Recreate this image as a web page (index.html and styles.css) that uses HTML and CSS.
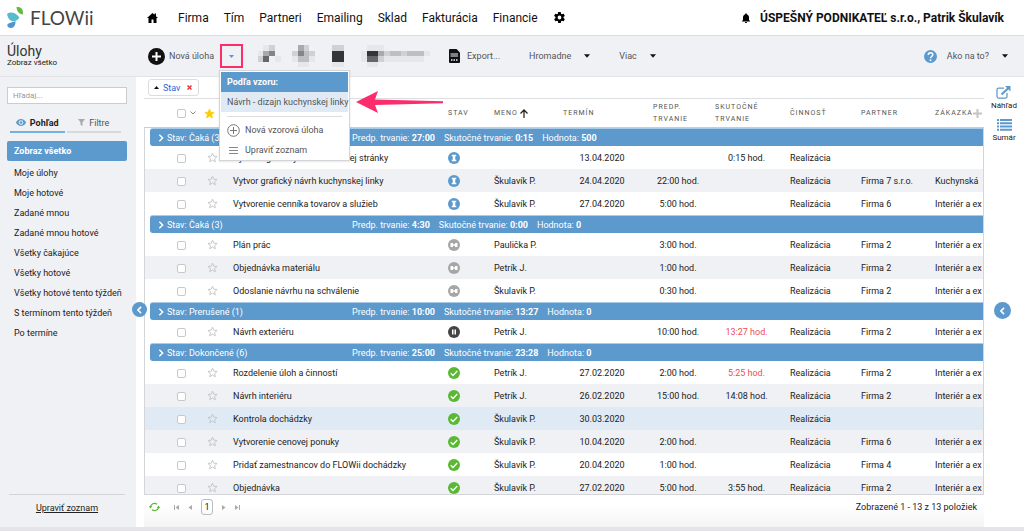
FILE: index.html
```html
<!DOCTYPE html>
<html lang="sk">
<head>
    <meta charset="UTF-8">
    <meta name="viewport" content="width=device-width, initial-scale=1.0">
    <title>FLOWii - Úlohy</title>
    <link rel="stylesheet" href="styles.css">
</head>
<body>
    <svg class="sprite" aria-hidden="true">
        <symbol id="star" viewBox="0 0 24 24"><path d="M12 2.5l2.8 6.6 7.2.6-5.5 4.7 1.7 7L12 17.600l-6.200 3.800 1.700-7L2 9.700l7.200-.6z"/></symbol>
        <symbol id="waiting" viewBox="0 0 24 24"><circle cx="12" cy="12" r="12" fill="#5c99cd"/><path fill="#fff" d="M7.500 5.500h9v3h-2v7h2v3h-9v-3h2v-7h-2z"/></symbol>
        <symbol id="idle" viewBox="0 0 24 24"><circle cx="12" cy="12" r="12" fill="#a6a6a6"/><path fill="#fff" d="M5 8h5v2.500h4V8h5v8h-5v-2.500h-4V16H5z"/></symbol>
        <symbol id="paused" viewBox="0 0 24 24"><circle cx="12" cy="12" r="12" fill="#444"/><path fill="#fff" d="M8 7h3v10H8zM13 7h3v10h-3z"/></symbol>
        <symbol id="done" viewBox="0 0 24 24"><circle cx="12" cy="12" r="12" fill="#5bb833"/><path fill="none" stroke="#fff" stroke-width="2.600" d="M5.500 12.500l4.500 4.500L18.500 8"/></symbol>
        <symbol id="chevron" viewBox="0 0 8 12"><path fill="none" stroke="currentColor" stroke-width="2.200" d="M1.500 1l5 5-5 5"/></symbol>
        <symbol id="caret" viewBox="0 0 10 6"><path fill="currentColor" d="M0 0h10L5 6z"/></symbol>
    </svg>

    <header class="topbar">
        <a class="logo" href="#">
            <svg width="17" height="22" viewBox="0 0 17 22">
                <path fill="#62bb35" d="M9.500 0c4-.5 6.500 2 6.500 5.500 0 .8-.1 1.500-.3 2.100C12 7 9.800 4.500 9.500 0z"/>
                <path fill="#56bccb" d="M0 7c3.500-2.500 8.500-2 12.500 3.700-2.500 3.300-6 4.300-8.500 3C1.500 12.500.7 9.800 0 7z"/>
                <path fill="#5594cd" d="M8.500 14c.3 4-1.500 7-4.500 7-2.200 0-3.500-1.200-3.800-2.800C1 15.500 4.500 16 8.500 14z"/>
            </svg>
            <span>FLOWii</span>
        </a>
        <nav class="mainnav">
            <a href="#" aria-label="Domov"><svg width="11" height="10" viewBox="0 0 22 20"><path d="M11 0L0 10h3v10h6v-7h4v7h6V10h3l-4-3.600V1h-3v2.600z"/></svg></a>
            <a href="#">Firma</a>
            <a href="#">Tím</a>
            <a href="#">Partneri</a>
            <a href="#">Emailing</a>
            <a href="#">Sklad</a>
            <a href="#">Fakturácia</a>
            <a href="#">Financie</a>
            <a href="#" aria-label="Nastavenia"><svg width="13" height="13" viewBox="0 0 24 24"><path d="M19.400 13c.1-.7.1-1.300 0-2l2.200-1.700c.2-.2.3-.5.100-.7l-2-3.500c-.1-.2-.4-.3-.7-.2l-2.500 1c-.5-.4-1.100-.7-1.700-1L14.400 2.400c0-.2-.2-.4-.5-.4h-4c-.2 0-.5.200-.5.400L9 5c-.6.300-1.100.6-1.700 1l-2.500-1c-.2-.1-.5 0-.6.200l-2 3.500c-.1.200-.1.500.1.600L4.600 11c-.1.700-.1 1.300 0 2l-2.200 1.700c-.2.100-.2.400-.1.600l2 3.500c.1.200.4.300.6.200l2.500-1c.5.400 1.100.7 1.700 1l.4 2.600c0 .2.200.4.500.4h4c.2 0 .5-.2.500-.4l.4-2.600c.6-.3 1.100-.6 1.700-1l2.500 1c.2.100.5 0 .6-.2l2-3.500c.1-.2.1-.5-.1-.6zM12 15.500a3.500 3.500 0 110-7 3.500 3.500 0 010 7z"/></svg></a>
        </nav>
        <div class="account">
            <svg width="8" height="10" viewBox="0 0 16 20"><path d="M8 20c1.200 0 2.200-.8 2.200-2H5.800c0 1.200 1 2 2.200 2zm6-6V9c0-3.200-1.700-5.800-4.500-6.500V1.800a1.500 1.500 0 00-3 0v.7C3.700 3.200 2 5.800 2 9v5l-2 2v1h16v-1z"/></svg>
            <strong>ÚSPEŠNÝ PODNIKATEĽ s.r.o., Patrik Škulavík</strong>
        </div>
    </header>

    <div class="toolbar">
        <div class="page-title">
            <h1>Úlohy</h1>
            <span>Zobraz všetko</span>
        </div>
        <button class="tool new-task" type="button">
            <svg width="17" height="17" viewBox="0 0 17 17"><circle cx="8.500" cy="8.500" r="8.500" fill="#111"/><path stroke="#fff" stroke-width="2" d="M8.500 4v9M4 8.500h9"/></svg>
            Nová úloha
        </button>
        <div class="split">
            <button class="split-toggle" type="button" aria-label="Vzory úloh"><svg width="5" height="3"><use href="#caret"/></svg></button>
            <div class="menu">
                <div class="menu-title">Podľa vzoru:</div>
                <a class="menu-item active" href="#">Návrh - dizajn kuchynskej linky</a>
                <div class="menu-sep"></div>
                <a class="menu-item" href="#">
                    <svg width="13" height="13" viewBox="0 0 13 13" fill="none" stroke="#777"><circle cx="6.500" cy="6.500" r="5.800"/><path d="M6.500 3v7M3 6.500h7"/></svg>
                    Nová vzorová úloha
                </a>
                <a class="menu-item" href="#">
                    <svg width="13" height="9" viewBox="0 0 13 9" stroke="#888"><path d="M2 1.500h9M2 4.500h9M2 7.500h9"/></svg>
                    Upraviť zoznam
                </a>
            </div>
            <svg class="pointer" width="88" height="22" viewBox="0 0 88 22"><path fill="#fc2d6c" d="M0 11L22 0l-3 8.500L87 10.200v2L19 14l3 8z"/></svg>
        </div>
        <svg class="masked" width="178" height="22" viewBox="0 0 31 4" preserveAspectRatio="none" shape-rendering="crispEdges">
            <path fill="#e6e7ea" d="M2 0h2v1H2zM1 1h1v2H1zM4 2h1v1H4zM7 1h1v2H7zM10 1h1v2h-1zM8 3h2v1H8zM14 3h2v1h-2zM19 1h1v2h-1zM20 0h2v1h-2zM20 3h2v1h-2zM23 2h7v1h-7zM22 0h1v1h-1zM30 1h1v1h-1z"/>
            <path fill="#d0d1d3" d="M3 0h1v1H3zM1 2h1v1H1zM9 0h1v1H9zM7 1h1v1H7zM14 0h2v1h-2zM22 2h1v1h-1zM23 1h1v1h-1zM26 1h1v1h-1zM10 1h1v1h-1z"/>
            <path fill="#bebfc1" d="M24 1h2v1h-2zM27 1h3v1h-3zM8 0h1v1H8zM9 1h1v2H9zM8 2h1v1H8z"/>
            <path fill="#a9a9ab" d="M2 1h1v1H2zM8 0h1v1H8zM22 1h1v1h-1z"/>
            <path fill="#858587" d="M3 1h1v1H3zM8 1h1v1H8z"/>
            <path fill="#666769" d="M2 2h1v1H2zM20 2h2v1h-2z"/>
            <path fill="#333536" d="M14 1h2v2h-2zM20 1h2v1h-2z"/>
        </svg>
        <button class="tool export" type="button">
            <svg width="11" height="14" viewBox="0 0 22 28"><path fill="#111" d="M2 0h13l7 7v19a2 2 0 01-2 2H2a2 2 0 01-2-2V2a2 2 0 012-2z"/><path stroke="#f0f1f5" stroke-width="2" d="M3 10h15M3 14h15"/><path stroke="#f0f1f5" stroke-width="3" d="M4 22h3M9 22h3M14 22h3"/></svg>
            Export...
        </button>
        <button class="tool dropdown" type="button">Hromadne <svg width="6" height="4"><use href="#caret"/></svg></button>
        <button class="tool dropdown" type="button">Viac <svg width="6" height="4"><use href="#caret"/></svg></button>
        <button class="tool help" type="button">
            <svg width="13" height="13" viewBox="0 0 26 26"><circle cx="13" cy="13" r="13" fill="#5c99cd"/><path fill="none" stroke="#fff" stroke-width="3" d="M8.500 10c0-6 9-6 9-.5 0 3.500-4.500 3.500-4.500 7"/><circle cx="13" cy="20.500" r="2" fill="#fff"/></svg>
            Ako na to?
            <svg class="help-caret" width="6" height="4"><use href="#caret"/></svg>
        </button>
    </div>

    <div class="layout">
        <aside class="sidebar">
            <input class="search" type="text" placeholder="Hľadaj..." aria-label="Hľadaj">
            <div class="tabs">
                <button class="tab current" type="button">
                    <svg width="10" height="7" viewBox="0 0 20 14"><path fill="#5c99cd" d="M10 0C5.500 0 1.700 2.900 0 7c1.700 4.100 5.500 7 10 7s8.300-2.900 10-7c-1.700-4.100-5.500-7-10-7z"/><circle cx="10" cy="7" r="4.500" fill="#f0f1f5"/><circle cx="10" cy="7" r="2.700" fill="#5c99cd"/></svg>
                    Pohľad
                </button>
                <button class="tab" type="button">
                    <svg width="7" height="7" viewBox="0 0 14 14"><path fill="#aaa" d="M0 0h14L9 6.500V14l-4-2.500v-5z"/></svg>
                    Filtre
                </button>
            </div>
            <ul class="views">
                <li><a class="selected" href="#">Zobraz všetko</a></li>
                <li><a href="#">Moje úlohy</a></li>
                <li><a href="#">Moje hotové</a></li>
                <li><a href="#">Zadané mnou</a></li>
                <li><a href="#">Zadané mnou hotové</a></li>
                <li><a href="#">Všetky čakajúce</a></li>
                <li><a href="#">Všetky hotové</a></li>
                <li><a href="#">Všetky hotové tento týždeň</a></li>
                <li><a href="#">S termínom tento týždeň</a></li>
                <li><a href="#">Po termíne</a></li>
            </ul>
            <div class="sidebar-foot"><a href="#">Upraviť zoznam</a></div>
            <button class="collapse collapse-left" type="button" aria-label="Skryť panel"><svg width="5" height="8" viewBox="0 0 8 12"><path fill="none" stroke="currentColor" stroke-width="2.500" d="M6.500 1l-5 5 5 5"/></svg></button>
        </aside>

        <main class="content">
            <div class="grouping">
                <button class="chip" type="button">
                    <svg width="5" height="3" viewBox="0 0 10 6"><path fill="#111" d="M0 6h10L5 0z"/></svg>
                    Stav
                    <svg class="chip-x" width="5" height="5" viewBox="0 0 10 10"><path stroke="#e23b3b" stroke-width="3" d="M1 1l8 8M9 1L1 9"/></svg>
                </button>
            </div>
            <div class="grid">
                <table>
                    <colgroup>
                        <col class="c-check"><col class="c-star"><col><col class="c-state"><col class="c-name"><col class="c-term">
                        <col class="c-plan"><col class="c-real"><col class="c-act"><col class="c-partner"><col class="c-order">
                    </colgroup>
                    <thead>
                        <tr>
                            <th class="check"><input type="checkbox" aria-label="Označiť všetko"><svg class="check-more" width="6" height="4" viewBox="0 0 12 8"><path fill="none" stroke="#888" stroke-width="2" d="M1 1l5 5 5-5"/></svg></th>
                            <th class="fav"><svg class="star gold" width="11" height="11"><use href="#star"/></svg></th>
                            <th></th>
                            <th>Stav</th>
                            <th>Meno<svg class="sort" width="8" height="9" viewBox="0 0 16 18"><path fill="none" stroke="#222" stroke-width="2.500" d="M8 18V2M1 9l7-7 7 7"/></svg></th>
                            <th>Termín</th>
                            <th>Predp. trvanie</th>
                            <th>Skutočné trvanie</th>
                            <th>Činnosť</th>
                            <th>Partner</th>
                            <th>Zákazka<svg class="add-col" width="9" height="9" viewBox="0 0 9 9"><path stroke="#c4c4c4" stroke-width="2" d="M4.500 0v9M0 4.500h9"/></svg></th>
                        </tr>
                    </thead>
                    <tbody>
                        <tr class="group"><td colspan="11"><div class="band"><span class="band-name"><svg width="6" height="8"><use href="#chevron"/></svg>Stav: Čaká (3)</span><span>Predp. trvanie: <b>27:00</b></span><span>Skutočné trvanie: <b>0:15</b></span><span>Hodnota: <b>500</b></span></div></td></tr>
                        <tr>
                            <td class="check"><input type="checkbox" aria-label="Označiť"></td><td class="fav"><svg class="star" width="11" height="11"><use href="#star"/></svg></td>
                            <td>Vytvoriť grafický návrh webovej stránky</td><td><svg class="state" width="12" height="12"><use href="#waiting"/></svg></td>
                            <td></td><td class="num">13.04.2020</td><td></td><td class="num">0:15 hod.</td><td>Realizácia</td><td></td><td></td>
                        </tr>
                        <tr class="alt">
                            <td class="check"><input type="checkbox" aria-label="Označiť"></td><td class="fav"><svg class="star" width="11" height="11"><use href="#star"/></svg></td>
                            <td>Vytvor grafický návrh kuchynskej linky</td><td><svg class="state" width="12" height="12"><use href="#waiting"/></svg></td>
                            <td>Škulavík P.</td><td class="num">24.04.2020</td><td class="num">22:00 hod.</td><td></td><td>Realizácia</td><td>Firma 7 s.r.o.</td><td>Kuchynská</td>
                        </tr>
                        <tr>
                            <td class="check"><input type="checkbox" aria-label="Označiť"></td><td class="fav"><svg class="star" width="11" height="11"><use href="#star"/></svg></td>
                            <td>Vytvorenie cenníka tovarov a služieb</td><td><svg class="state" width="12" height="12"><use href="#waiting"/></svg></td>
                            <td>Škulavík P.</td><td class="num">27.04.2020</td><td class="num">5:00 hod.</td><td></td><td>Realizácia</td><td>Firma 6</td><td>Interiér a ex</td>
                        </tr>
                        <tr class="group"><td colspan="11"><div class="band"><span class="band-name"><svg width="6" height="8"><use href="#chevron"/></svg>Stav: Čaká (3)</span><span>Predp. trvanie: <b>4:30</b></span><span>Skutočné trvanie: <b>0:00</b></span><span>Hodnota: <b>0</b></span></div></td></tr>
                        <tr>
                            <td class="check"><input type="checkbox" aria-label="Označiť"></td><td class="fav"><svg class="star" width="11" height="11"><use href="#star"/></svg></td>
                            <td>Plán prác</td><td><svg class="state" width="12" height="12"><use href="#idle"/></svg></td>
                            <td>Paulička P.</td><td></td><td class="num">3:00 hod.</td><td></td><td>Realizácia</td><td>Firma 2</td><td>Interiér a ex</td>
                        </tr>
                        <tr class="alt">
                            <td class="check"><input type="checkbox" aria-label="Označiť"></td><td class="fav"><svg class="star" width="11" height="11"><use href="#star"/></svg></td>
                            <td>Objednávka materiálu</td><td><svg class="state" width="12" height="12"><use href="#idle"/></svg></td>
                            <td>Petrík J.</td><td></td><td class="num">1:00 hod.</td><td></td><td>Realizácia</td><td>Firma 2</td><td>Interiér a ex</td>
                        </tr>
                        <tr>
                            <td class="check"><input type="checkbox" aria-label="Označiť"></td><td class="fav"><svg class="star" width="11" height="11"><use href="#star"/></svg></td>
                            <td>Odoslanie návrhu na schválenie</td><td><svg class="state" width="12" height="12"><use href="#idle"/></svg></td>
                            <td>Škulavík P.</td><td></td><td class="num">0:30 hod.</td><td></td><td>Realizácia</td><td>Firma 2</td><td>Interiér a ex</td>
                        </tr>
                        <tr class="group"><td colspan="11"><div class="band"><span class="band-name"><svg width="6" height="8"><use href="#chevron"/></svg>Stav: Prerušené (1)</span><span>Predp. trvanie: <b>10:00</b></span><span>Skutočné trvanie: <b>13:27</b></span><span>Hodnota: <b>0</b></span></div></td></tr>
                        <tr>
                            <td class="check"><input type="checkbox" aria-label="Označiť"></td><td class="fav"><svg class="star" width="11" height="11"><use href="#star"/></svg></td>
                            <td>Návrh exteriéru</td><td><svg class="state" width="12" height="12"><use href="#paused"/></svg></td>
                            <td>Petrík J.</td><td></td><td class="num">10:00 hod.</td><td class="num over">13:27 hod.</td><td>Realizácia</td><td>Firma 2</td><td>Interiér a ex</td>
                        </tr>
                        <tr class="group"><td colspan="11"><div class="band"><span class="band-name"><svg width="6" height="8"><use href="#chevron"/></svg>Stav: Dokončené (6)</span><span>Predp. trvanie: <b>25:00</b></span><span>Skutočné trvanie: <b>23:28</b></span><span>Hodnota: <b>0</b></span></div></td></tr>
                        <tr>
                            <td class="check"><input type="checkbox" aria-label="Označiť"></td><td class="fav"><svg class="star" width="11" height="11"><use href="#star"/></svg></td>
                            <td>Rozdelenie úloh a činností</td><td><svg class="state" width="12" height="12"><use href="#done"/></svg></td>
                            <td>Petrík J.</td><td class="num">27.02.2020</td><td class="num">2:00 hod.</td><td class="num over">5:25 hod.</td><td>Realizácia</td><td>Firma 2</td><td>Interiér a ex</td>
                        </tr>
                        <tr class="alt">
                            <td class="check"><input type="checkbox" aria-label="Označiť"></td><td class="fav"><svg class="star" width="11" height="11"><use href="#star"/></svg></td>
                            <td>Návrh interiéru</td><td><svg class="state" width="12" height="12"><use href="#done"/></svg></td>
                            <td>Petrík J.</td><td class="num">26.02.2020</td><td class="num">15:00 hod.</td><td class="num">14:08 hod.</td><td>Realizácia</td><td>Firma 2</td><td>Interiér a ex</td>
                        </tr>
                        <tr class="hovered">
                            <td class="check"><input type="checkbox" aria-label="Označiť"></td><td class="fav"><svg class="star" width="11" height="11"><use href="#star"/></svg></td>
                            <td>Kontrola dochádzky</td><td><svg class="state" width="12" height="12"><use href="#done"/></svg></td>
                            <td>Škulavík P.</td><td class="num">30.03.2020</td><td></td><td></td><td>Realizácia</td><td></td><td></td>
                        </tr>
                        <tr class="alt">
                            <td class="check"><input type="checkbox" aria-label="Označiť"></td><td class="fav"><svg class="star" width="11" height="11"><use href="#star"/></svg></td>
                            <td>Vytvorenie cenovej ponuky</td><td><svg class="state" width="12" height="12"><use href="#done"/></svg></td>
                            <td>Škulavík P.</td><td class="num">10.04.2020</td><td class="num">2:00 hod.</td><td></td><td>Realizácia</td><td>Firma 6</td><td>Interiér a ex</td>
                        </tr>
                        <tr>
                            <td class="check"><input type="checkbox" aria-label="Označiť"></td><td class="fav"><svg class="star" width="11" height="11"><use href="#star"/></svg></td>
                            <td>Pridať zamestnancov do FLOWii dochádzky</td><td><svg class="state" width="12" height="12"><use href="#done"/></svg></td>
                            <td>Škulavík P.</td><td class="num">20.04.2020</td><td class="num">1:00 hod.</td><td></td><td>Realizácia</td><td>Firma 4</td><td>Interiér a ex</td>
                        </tr>
                        <tr class="alt">
                            <td class="check"><input type="checkbox" aria-label="Označiť"></td><td class="fav"><svg class="star" width="11" height="11"><use href="#star"/></svg></td>
                            <td>Objednávka</td><td><svg class="state" width="12" height="12"><use href="#done"/></svg></td>
                            <td>Škulavík P.</td><td class="num">27.02.2020</td><td class="num">5:00 hod.</td><td class="num">3:55 hod.</td><td>Realizácia</td><td>Firma 2</td><td>Interiér a ex</td>
                        </tr>
                    </tbody>
                </table>
            </div>
            <div class="pager">
                <button class="refresh" type="button" aria-label="Obnoviť"><svg width="11" height="10" viewBox="0 0 22 20"><path fill="none" stroke="#5bb833" stroke-width="2.500" d="M3 10a8 7.500 0 0113-5.500M19 10a8 7.500 0 01-13 5.500"/><path fill="#5bb833" d="M-.5 8h7L3 13zM22.500 12h-7L19 7z"/></svg></button>
                <button type="button" aria-label="Prvá"><svg width="5" height="5" viewBox="0 0 10 10"><path fill="#aaa" d="M0 0h2v10H0zM10 0v10L3 5z"/></svg></button>
                <button type="button" aria-label="Predošlá"><svg width="4" height="5" viewBox="0 0 8 10"><path fill="#aaa" d="M8 0v10L1 5z"/></svg></button>
                <button class="page" type="button">1</button>
                <button type="button" aria-label="Ďalšia"><svg width="4" height="5" viewBox="0 0 8 10"><path fill="#aaa" d="M0 0v10l7-5z"/></svg></button>
                <button type="button" aria-label="Posledná"><svg width="5" height="5" viewBox="0 0 10 10"><path fill="#aaa" d="M8 0h2v10H8zM0 0v10l7-5z"/></svg></button>
                <span class="count">Zobrazené 1 - 13 z 13 položiek</span>
            </div>
        </main>

        <aside class="rail">
            <a href="#">
                <svg width="15" height="13" viewBox="0 0 30 26"><path fill="none" stroke="#5c99cd" stroke-width="2.500" d="M16 4H5a3 3 0 00-3 3v14a3 3 0 003 3h14a3 3 0 003-3v-7"/><path stroke="#5c99cd" stroke-width="4" d="M11 17L25 4"/><path fill="#5c99cd" d="M18 0h11v11z"/></svg>
                Náhľad
            </a>
            <a href="#">
                <svg width="15" height="12" viewBox="0 0 30 24"><path stroke="#5c99cd" stroke-width="4" d="M0 2h4M6 2h24M0 8.500h4M6 8.500h24M0 15h4M6 15h24M0 21.500h4M6 21.500h24"/></svg>
                Sumár
            </a>
            <button class="collapse collapse-right" type="button" aria-label="Zobraziť panel"><svg width="5" height="8" viewBox="0 0 8 12"><path fill="none" stroke="currentColor" stroke-width="2.500" d="M6.500 1l-5 5 5 5"/></svg></button>
        </aside>
    </div>
    <div class="bottom-edge"></div>
</body>
</html>
```
FILE: styles.css
```css
* {
    box-sizing: border-box;
}
body {
    margin: 0;
    height: 100vh;
    display: flex;
    flex-direction: column;
    font-family: Roboto, "Liberation Sans", sans-serif;
    font-size: 9px;
    color: #222;
    background-color: #fff;
    overflow: hidden;
}
a {
    color: inherit;
    text-decoration: none;
}
button {
    font: inherit;
    color: inherit;
    padding: 0;
    border: none;
    background: none;
    cursor: pointer;
}
svg {
    flex: none;
}
.sprite {
    display: none;
}

/* top navigation */
.topbar {
    display: flex;
    align-items: center;
    height: 36px;
    padding-right: 20px;
    border-bottom: 1px solid #dcdde0;
}
.logo {
    display: flex;
    width: 147px;
    padding-left: 7px;
    gap: 6px;
    align-items: center;
    font-family: Lato, sans-serif;
    font-size: 19px;
    line-height: 22px;
    color: #444;
}
.mainnav {
    display: flex;
    align-items: center;
    gap: 15px;
    font-size: 12px;
    color: #111;
}
.mainnav a:first-child {
    margin-right: 5px;
}
.mainnav svg {
    display: block;
}
.account {
    display: flex;
    align-items: center;
    gap: 10px;
    margin-left: auto;
    font-size: 12px;
    color: #111;
}

/* toolbar */
.toolbar {
    display: flex;
    align-items: center;
    height: 41px;
    padding-right: 16px;
    background-color: #f0f1f5;
    border-bottom: 1px solid #e2e3e6;
}
.page-title {
    width: 148px;
    padding-left: 7px;
    font-size: 8px;
    line-height: 10px;
}
.page-title h1 {
    margin: 0;
    font-size: 14px;
    font-weight: normal;
    line-height: 14px;
    color: #333;
}
.tool {
    display: flex;
    align-items: center;
    color: #555;
    white-space: nowrap;
}
.tool svg {
    color: #111;
}
.new-task {
    width: 72px;
    gap: 4px;
}
.split {
    position: relative;
}
.split-toggle {
    display: flex;
    align-items: center;
    justify-content: center;
    width: 23px;
    height: 24px;
    border: 2px solid #fc2d6c;
    color: #5c99cd;
}
.masked {
    margin-left: 9px;
}
.export {
    margin-left: 19px;
    gap: 7px;
}
.dropdown {
    margin-left: 29px;
    gap: 13px;
}
.help {
    margin-left: auto;
    gap: 10px;
}
.help-caret {
    margin-left: 3px;
}

/* template menu */
.menu {
    position: absolute;
    top: 26px;
    left: -1px;
    z-index: 5;
    width: 131px;
    padding: 1px 1px 0;
    background-color: #fff;
    border: 1px solid #d3d5d8;
    box-shadow: 0 1px 2px rgba(0,0,0,0.1);
    white-space: nowrap;
}
.menu-title {
    padding-left: 6px;
    line-height: 20px;
    font-weight: bold;
    color: #fff;
    background-color: #5c99cd;
}
.menu-item {
    display: flex;
    align-items: center;
    gap: 5px;
    height: 20px;
    padding-left: 6px;
    color: #555;
}
.menu-item.active {
    background-color: #e0eaf5;
}
.menu-sep {
    margin: 4px 6px 3px;
    border-top: 1px solid #ddd;
}
.pointer {
    position: absolute;
    top: 47px;
    left: 136px;
    z-index: 6;
}

/* page body */
.layout {
    display: flex;
    flex: 1;
    min-height: 0;
}
.sidebar {
    position: relative;
    display: flex;
    flex-direction: column;
    width: 136px;
    padding: 10px 9px 0 7px;
    background-color: #f0f1f5;
}
.search {
    width: 100%;
    height: 17px;
    padding: 0 5px;
    border: 1px solid #ccc;
    font: inherit;
    font-size: 8px;
    background-color: #fff;
}
.search::placeholder {
    color: #999;
}
.tabs {
    display: flex;
    gap: 2px;
    margin: 10px 6px 8px 3px;
}
.tab {
    display: flex;
    flex: 1;
    align-items: center;
    justify-content: center;
    gap: 4px;
    height: 19px;
    border-bottom: 2px solid #d8d9db;
    color: #555;
}
.tab.current {
    border-bottom-color: #79afdc;
    font-weight: bold;
    color: #222;
}
.views {
    list-style: none;
    margin: 0;
    padding: 0;
}
.views a {
    display: block;
    padding-left: 7px;
    line-height: 20px;
}
.views li:first-child {
    margin-bottom: 2px;
}
.views .selected {
    font-weight: bold;
    color: #fff;
    background-color: #5c99cd;
    border-radius: 2px;
}
.sidebar-foot {
    height: 33px;
    margin: auto 2px 0;
    border-top: 1px solid #d3d4d8;
    text-align: center;
    line-height: 26px;
}
.sidebar-foot a {
    text-decoration: underline;
}
.collapse {
    position: absolute;
    display: flex;
    align-items: center;
    justify-content: center;
    border-radius: 50%;
    color: #fff;
    background-color: #5c99cd;
}
.collapse-left {
    top: 225px;
    right: -11px;
    z-index: 2;
    width: 15px;
    height: 15px;
}
.collapse-right {
    top: 225px;
    right: 13px;
    width: 17px;
    height: 17px;
}
.content {
    display: flex;
    flex: 1;
    flex-direction: column;
    min-width: 0;
    padding-left: 8px;
}
.grouping {
    height: 21px;
    padding: 2px 4px;
}
.chip {
    display: flex;
    align-items: center;
    gap: 4px;
    height: 17px;
    padding: 0 6px 0 5px;
    border: 1px solid #ddd;
    border-radius: 3px;
    color: #2a67d4;
}
.chip-x {
    margin-left: 3px;
}

/* task table */
.grid {
    flex: 1;
    min-height: 0;
    overflow: hidden;
    border-bottom: 1px solid #d3d5d8;
}
table {
    width: 100%;
    table-layout: fixed;
    border-spacing: 0;
}
.c-check {
    width: 53px;
}
.c-star {
    width: 30px;
}
.c-state {
    width: 46px;
}
.c-name {
    width: 69px;
}
.c-term {
    width: 90px;
}
.c-plan {
    width: 62px;
}
.c-real {
    width: 75px;
}
.c-act {
    width: 71px;
}
.c-partner {
    width: 75px;
}
.c-order {
    width: 54px;
}
th {
    height: 30px;
    padding: 0 0 0 6px;
    border-top: 1px solid #dcdde0;
    border-bottom: 1px solid #ccc;
    font-size: 7px;
    font-weight: normal;
    letter-spacing: 1px;
    line-height: 12px;
    text-align: left;
    text-transform: uppercase;
    color: #555;
}
th:last-child {
    white-space: nowrap;
}
td {
    height: 23px;
    padding: 0 0 0 6px;
    overflow: hidden;
    white-space: nowrap;
}
td:first-child {
    border-left: 1px solid #d3d5d8;
}
td:last-child {
    border-right: 1px solid #d3d5d8;
}
td:last-child,
th:last-child {
    padding-left: 5px;
}
.check {
    padding-left: 33px;
}
td.check {
    padding-left: 32px;
}
.fav,
td.num {
    padding-left: 0;
    text-align: center;
}
th.fav {
    padding-right: 6px;
}
.alt td {
    background-color: #f0f1f5;
}
.hovered td {
    background-color: #e0eaf5;
}
td.over {
    color: #ea4f4f;
}
.check input {
    appearance: none;
    width: 9px;
    height: 9px;
    margin: 0;
    vertical-align: middle;
    background-color: #fff;
    border: 1px solid #c8c8c8;
    border-radius: 2px;
}
.check-more {
    margin-left: 4px;
}
.star {
    vertical-align: middle;
    fill: none;
    stroke: #c4c4c4;
    stroke-width: 2;
}
.star.gold {
    fill: #fc0;
    stroke: #fc0;
}
.state {
    display: block;
}
.sort {
    margin-left: 2px;
    vertical-align: middle;
}
.add-col {
    vertical-align: middle;
}
.group td {
    height: 18px;
    padding: 0 0 0 5px;
}
.band {
    display: flex;
    align-items: center;
    gap: 9px;
    height: 18px;
    color: #fff;
    background-color: #5c99cd;
    border-top: 1px solid #a9cbe8;
    border-radius: 3px 0 0 3px;
}
.band-name {
    width: 193px;
    padding-left: 8px;
}
.band-name svg {
    margin-right: 3px;
    vertical-align: middle;
}
.pager {
    display: flex;
    align-items: center;
    height: 32px;
    padding: 0 7px 8px 5px;
    gap: 9px;
    background: linear-gradient(#fff 30%, #f4f4f6);
}
.pager button {
    display: flex;
    align-items: center;
    justify-content: center;
}
.pager .refresh {
    margin-right: 5px;
}
.pager .page {
    width: 12px;
    height: 16px;
    border: 1px solid #bbb;
    border-radius: 3px;
}
.count {
    margin-left: auto;
}

/* right rail */
.rail {
    position: relative;
    display: flex;
    flex-direction: column;
    align-items: center;
    gap: 7px;
    width: 40px;
    padding-top: 9px;
}
.rail a {
    display: flex;
    flex-direction: column;
    align-items: center;
    gap: 1px;
    font-size: 8px;
    line-height: 12px;
}
.bottom-edge {
    height: 4px;
    background-color: #e4e5e9;
}
```
